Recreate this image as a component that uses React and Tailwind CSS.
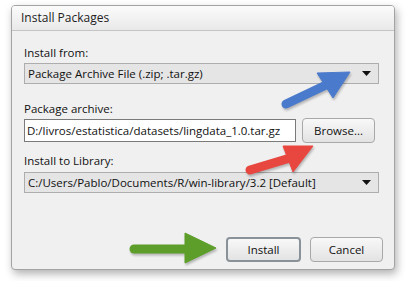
import React from 'react';

const font = { fontFamily: '"Open Sans", "Noto Sans", sans-serif' };

const Caret = () => (
  <svg width="9" height="5" viewBox="0 0 9 5" className="shrink-0">
    <path d="M0 0h9L4.5 5z" fill="#111" />
  </svg>
);

const Select = ({ value }) => (
  <div className="flex items-center justify-between h-[21px] w-[355px] border border-[#adadad] bg-[#e5e5e5] pl-[3px] pr-[7px] leading-none">
    <span>{value}</span>
    <Caret />
  </div>
);

const Button = ({ label, isDefault }) => (
  <div
    className={`flex items-center justify-center h-[25px] rounded-[4px] bg-gradient-to-b from-[#f8f8f8] to-[#e3e3e3] text-[#111] ${
      isDefault ? 'border-2 border-[#8a9299]' : 'border border-[#a8a8a8]'
    }`}
  >
    {label}
  </div>
);

// arrows drawn on top of the dialog
const Arrows = () => (
  <svg className="absolute inset-0 pointer-events-none" width="409" height="281" viewBox="0 0 409 281" style={{ filter: 'drop-shadow(1px 2px 1px rgba(0,0,0,0.25))' }}>
    <g fill="#4a7acb" stroke="#4a7acb">
      <line x1="286" y1="104" x2="326" y2="85" strokeWidth="9" strokeLinecap="round" />
      <polygon points="350,72 317,73 333,98" strokeWidth="1" strokeLinejoin="round" />
    </g>
    <g fill="#e8473f" stroke="#e8473f">
      <line x1="250" y1="170" x2="290" y2="158" strokeWidth="9" strokeLinecap="round" />
      <polygon points="313,146 283,146 293,172" strokeWidth="1" strokeLinejoin="round" />
    </g>
    <g fill="#5c9e29" stroke="#5c9e29">
      <line x1="134" y1="249" x2="190" y2="249" strokeWidth="9" strokeLinecap="round" />
      <polygon points="216,248 185,233 185,263" strokeWidth="1" strokeLinejoin="round" />
    </g>
  </svg>
);

export default function App() {
  return (
    <div className="relative w-[409px] h-[281px] bg-white overflow-hidden text-[11.5px]" style={font}>
      <div className="ml-[11px] mt-[5px] w-[384px] h-[265px] flex flex-col rounded-[4px] border border-[#a3a3a3] bg-[#f0f0f0] shadow-[2px_4px_8px_rgba(0,0,0,0.3)] overflow-hidden">
        <div className="h-[25px] shrink-0 flex items-center pl-[9px] border-b border-[#c4c4c4] bg-gradient-to-b from-[#fbfbfb] to-[#e9e9e9] text-[12px] text-[#222]">
          Install Packages
        </div>
        <div className="flex flex-col pl-[12px] pt-[14px] text-[#111]">
          <div className="leading-[15px] h-[15px]">Install from:</div>
          <div className="mt-[3px]">
            <Select value="Package Archive File (.zip; .tar.gz)" />
          </div>
          <div className="leading-[15px] h-[15px] mt-[17px]">Package archive:</div>
          <div className="flex items-center gap-[6px] mt-[2px]">
            <div className="flex items-center h-[23px] w-[272px] border border-[#7a7a7a] bg-white pl-[2px] leading-none">
              D:/livros/estatistica/datasets/lingdata_1.0.tar.gz
            </div>
            <div className="w-[73px]">
              <Button label="Browse..." />
            </div>
          </div>
          <div className="leading-[15px] h-[15px] mt-[10px]">Install to Library:</div>
          <div className="mt-[4px]">
            <Select value="C:/Users/Pablo/Documents/R/win-library/3.2 [Default]" />
          </div>
          <div className="flex justify-end gap-[9px] pr-[11px] mt-[44px]">
            <div className="w-[75px]">
              <Button label="Install" isDefault />
            </div>
            <div className="w-[73px]">
              <Button label="Cancel" />
            </div>
          </div>
        </div>
      </div>
      <Arrows />
    </div>
  );
}
